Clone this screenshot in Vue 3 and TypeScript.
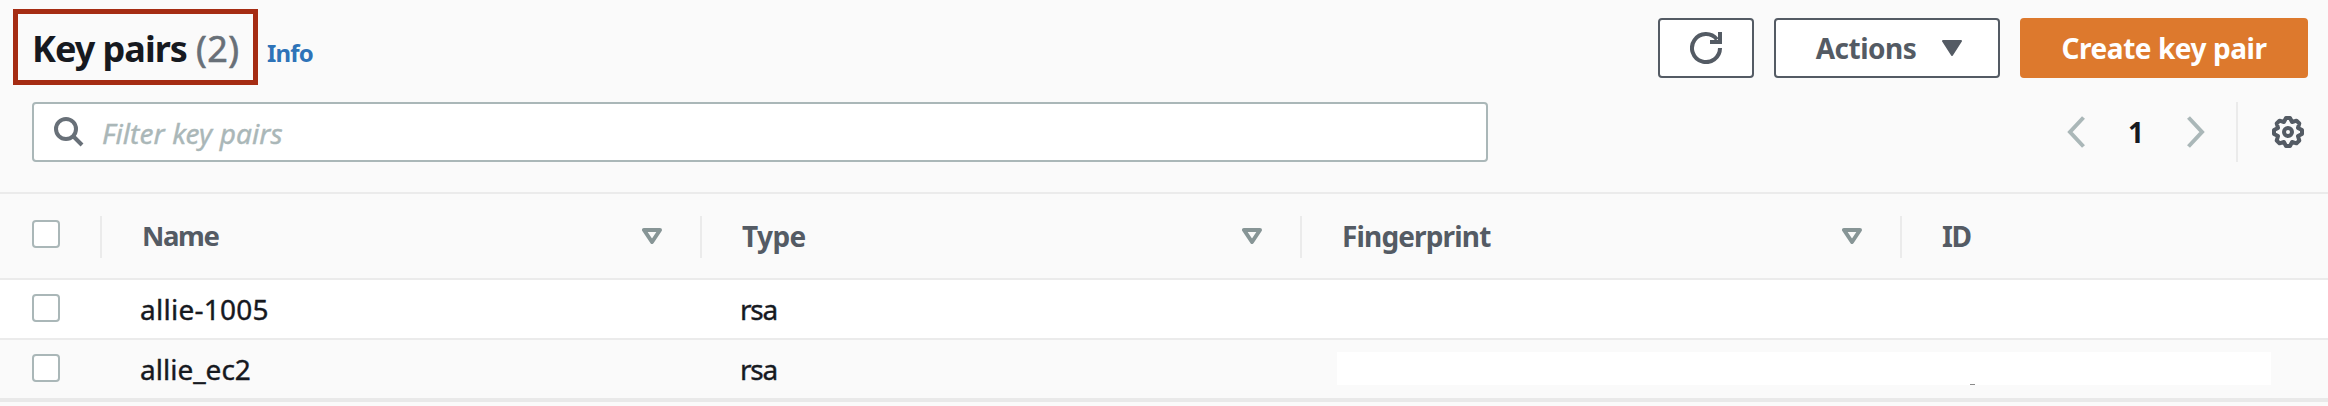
<script setup lang="ts">
interface Column {
  key: string
  label: string
  sortable: boolean
}

interface KeyPair {
  name: string
  type: string
}

const columns: Column[] = [
  { key: 'name', label: 'Name', sortable: true },
  { key: 'type', label: 'Type', sortable: true },
  { key: 'fingerprint', label: 'Fingerprint', sortable: true },
  { key: 'id', label: 'ID', sortable: false },
]

const rows: KeyPair[] = [
  { name: 'allie-1005', type: 'rsa' },
  { name: 'allie_ec2', type: 'rsa' },
]
</script>

<template>
  <main class="panel">
    <header class="head">
      <h1 class="title"><span class="t-title">Key pairs</span><span class="t-count">({{ rows.length }})</span></h1>
      <a class="info">Info</a>
      <div class="buttons">
        <button class="btn refresh" aria-label="Refresh">
          <svg width="32" height="32" viewBox="0 0 32 32" fill="none" stroke="currentColor" stroke-width="4">
            <path d="M30 16A14 14 0 1 1 27 7.4" />
            <path d="M30 0V10H20" />
          </svg>
        </button>
        <button class="btn actions">
          <span class="t-actions">Actions</span>
          <svg width="20" height="16" viewBox="0 0 20 16" fill="currentColor" stroke="currentColor" stroke-width="2" stroke-linejoin="round">
            <path d="M1 1H19L10 15Z" />
          </svg>
        </button>
        <button class="btn primary"><span class="t-create">Create key pair</span></button>
      </div>
    </header>

    <div class="tools">
      <div class="search">
        <svg width="30" height="30" viewBox="0 0 30 30" fill="none" stroke="currentColor" stroke-width="4">
          <circle cx="12" cy="12" r="10" />
          <path d="M19 19L28 28" />
        </svg>
        <span class="t-filter">Filter key pairs</span>
      </div>
      <div class="pager">
        <svg class="chev" width="18" height="32" viewBox="0 0 18 32" fill="none" stroke="currentColor" stroke-width="4">
          <path d="M16.5 1.5L3 16L16.5 30.5" />
        </svg>
        <span class="page">1</span>
        <svg class="chev" width="18" height="32" viewBox="0 0 18 32" fill="none" stroke="currentColor" stroke-width="4">
          <path d="M1.5 1.5L15 16L1.5 30.5" />
        </svg>
        <span class="divider"></span>
        <svg class="gear" width="32" height="32" viewBox="0 0 32 32" fill="none" stroke="currentColor" stroke-width="4" stroke-linejoin="round">
          <path d="M14 2H18L20.1 6L24.5 4.7L27.3 7.5L26 11.9L30 14V18L26 20.1L27.3 24.5L24.5 27.3L20.1 26L18 30H14L11.9 26L7.5 27.3L4.7 24.5L6 20.1L2 18V14L6 11.9L4.7 7.5L7.5 4.7L11.9 6Z" />
          <circle cx="16" cy="16" r="4" />
        </svg>
      </div>
    </div>

    <section class="grid">
      <div class="row header">
        <div class="check"><i class="box"></i></div>
        <div v-for="c in columns" :key="c.key" class="th">
          <span class="th-label" :class="'t-' + c.key">{{ c.label }}</span>
          <svg v-if="c.sortable" width="20" height="16" viewBox="0 0 20 16" fill="none" stroke="currentColor" stroke-width="4" stroke-linejoin="round">
            <path d="M2 2H18L10 14Z" />
          </svg>
        </div>
      </div>
      <div v-for="(r, i) in rows" :key="r.name" class="row body">
        <div class="check"><i class="box"></i></div>
        <div class="td"><span :class="'t-row' + i">{{ r.name }}</span></div>
        <div class="td"><span class="t-rsa">{{ r.type }}</span></div>
        <div class="td wide"><div v-if="i === 1" class="redacted"><i class="speck"></i></div></div>
      </div>
    </section>
  </main>
</template>

<style>
body {
  margin: 0;
  background: #fafafa;
}
</style>

<style scoped>
.panel {
  box-sizing: border-box;
  width: 2328px;
  height: 406px;
  overflow: hidden;
  background: #fafafa;
  color: #16191f;
  font-family: "Noto Sans", "Open Sans", sans-serif;
  font-size: 28px;
  line-height: 40px;
  white-space: nowrap;
}
.head {
  display: flex;
  align-items: flex-start;
  height: 102px;
  box-sizing: border-box;
  padding: 9px 20px 0 13px;
}
.title {
  box-sizing: border-box;
  display: flex;
  width: 245px;
  height: 76px;
  margin: 0;
  padding: 15px 0 0 14px;
  border: 5px solid #a52c13;
  font-size: 36px;
  line-height: 40px;
  font-weight: 700;
}
.t-title { width: 164px; letter-spacing: -1px; }
.t-count {
  color: #687078;
  font-weight: 400;
  letter-spacing: 0.4px;
  -webkit-text-stroke: 0.6px currentColor;
}
.info {
  margin: 24px 0 0 9px;
  color: #2e73b8;
  font-size: 24px;
  font-weight: 700;
  line-height: 40px;
  letter-spacing: -0.8px;
}
.buttons {
  display: flex;
  gap: 20px;
  margin: 9px 0 0 auto;
}
.btn {
  box-sizing: border-box;
  display: flex;
  align-items: center;
  justify-content: center;
  height: 60px;
  padding: 0;
  border: 2px solid #545b64;
  border-radius: 4px;
  background: #fff;
  color: #545b64;
  font: inherit;
  font-weight: 700;
}
.refresh { width: 96px; }
.actions { width: 226px; gap: 26px; padding-left: 4px; }
.t-actions { letter-spacing: -0.5px; }
.primary { width: 288px; border-color: #dd792d; background: #dd792d; color: #fff; }
.t-create { letter-spacing: -0.45px; }
.tools {
  display: flex;
  justify-content: space-between;
  height: 90px;
  box-sizing: border-box;
  padding: 0 24px 0 32px;
}
.search {
  box-sizing: border-box;
  display: flex;
  align-items: center;
  gap: 18px;
  width: 1456px;
  height: 60px;
  padding-left: 20px;
  border: 2px solid #aab7b8;
  border-radius: 4px;
  background: #fff;
  color: #687078;
}
.t-filter {
  padding-top: 2px;
  color: #aab7b8;
  font-style: italic;
  letter-spacing: 0.1px;
  -webkit-text-stroke: 0.4px currentColor;
}
.pager {
  display: flex;
  align-items: center;
  height: 60px;
}
.chev { color: #aab7b8; }
.page { width: 102px; text-align: center; font-weight: 700; }
.divider { width: 2px; height: 60px; margin: 0 34px 0 31px; background: #ebebeb; }
.gear { color: #545b64; }
.row {
  display: grid;
  grid-template-columns: 100px 600px 600px 600px 1fr;
  box-sizing: border-box;
}
.check { padding-left: 32px; }
.box {
  display: block;
  box-sizing: border-box;
  width: 28px;
  height: 28px;
  border: 2px solid #aab7b8;
  border-radius: 4px;
  background: #fff;
}
.header {
  height: 88px;
  padding-top: 22px;
  border-top: 2px solid #ebebeb;
  border-bottom: 2px solid #ebebeb;
  color: #545b64;
  font-weight: 700;
}
.header .box { margin-top: 4px; }
.th {
  display: flex;
  align-items: center;
  justify-content: space-between;
  box-sizing: border-box;
  height: 42px;
  padding: 0 38px 0 40px;
  border-left: 2px solid #ebebeb;
}
.th svg { color: #879596; margin-top: -2px; }
.th-label { padding-bottom: 3px; }
.t-name { font-size: 27.5px; letter-spacing: -1.4px; }
.t-type { letter-spacing: -0.6px; }
.t-fingerprint { letter-spacing: -0.85px; }
.t-id { letter-spacing: -1.5px; }
.body {
  height: 60px;
  border-bottom: 2px solid #ebebeb;
  background: #fff;
}
.body .box { margin-top: 14px; }
.body:last-child {
  background: #fafafa;
  border-bottom: 4px solid #e9e9e9;
  height: 62px;
}
.td {
  padding: 9px 0 0 40px;
  -webkit-text-stroke: 0.4px currentColor;
}
.t-row0 { letter-spacing: 0.25px; }
.t-rsa { letter-spacing: -1.3px; }
.wide { grid-column: span 2; padding: 12px 0 0 37px; }
.redacted { position: relative; width: 934px; height: 33px; background: #fff; }
.speck {
  position: absolute;
  left: 633px;
  top: 32px;
  width: 5px;
  height: 1px;
  background: #8a8a8a;
}
</style>
